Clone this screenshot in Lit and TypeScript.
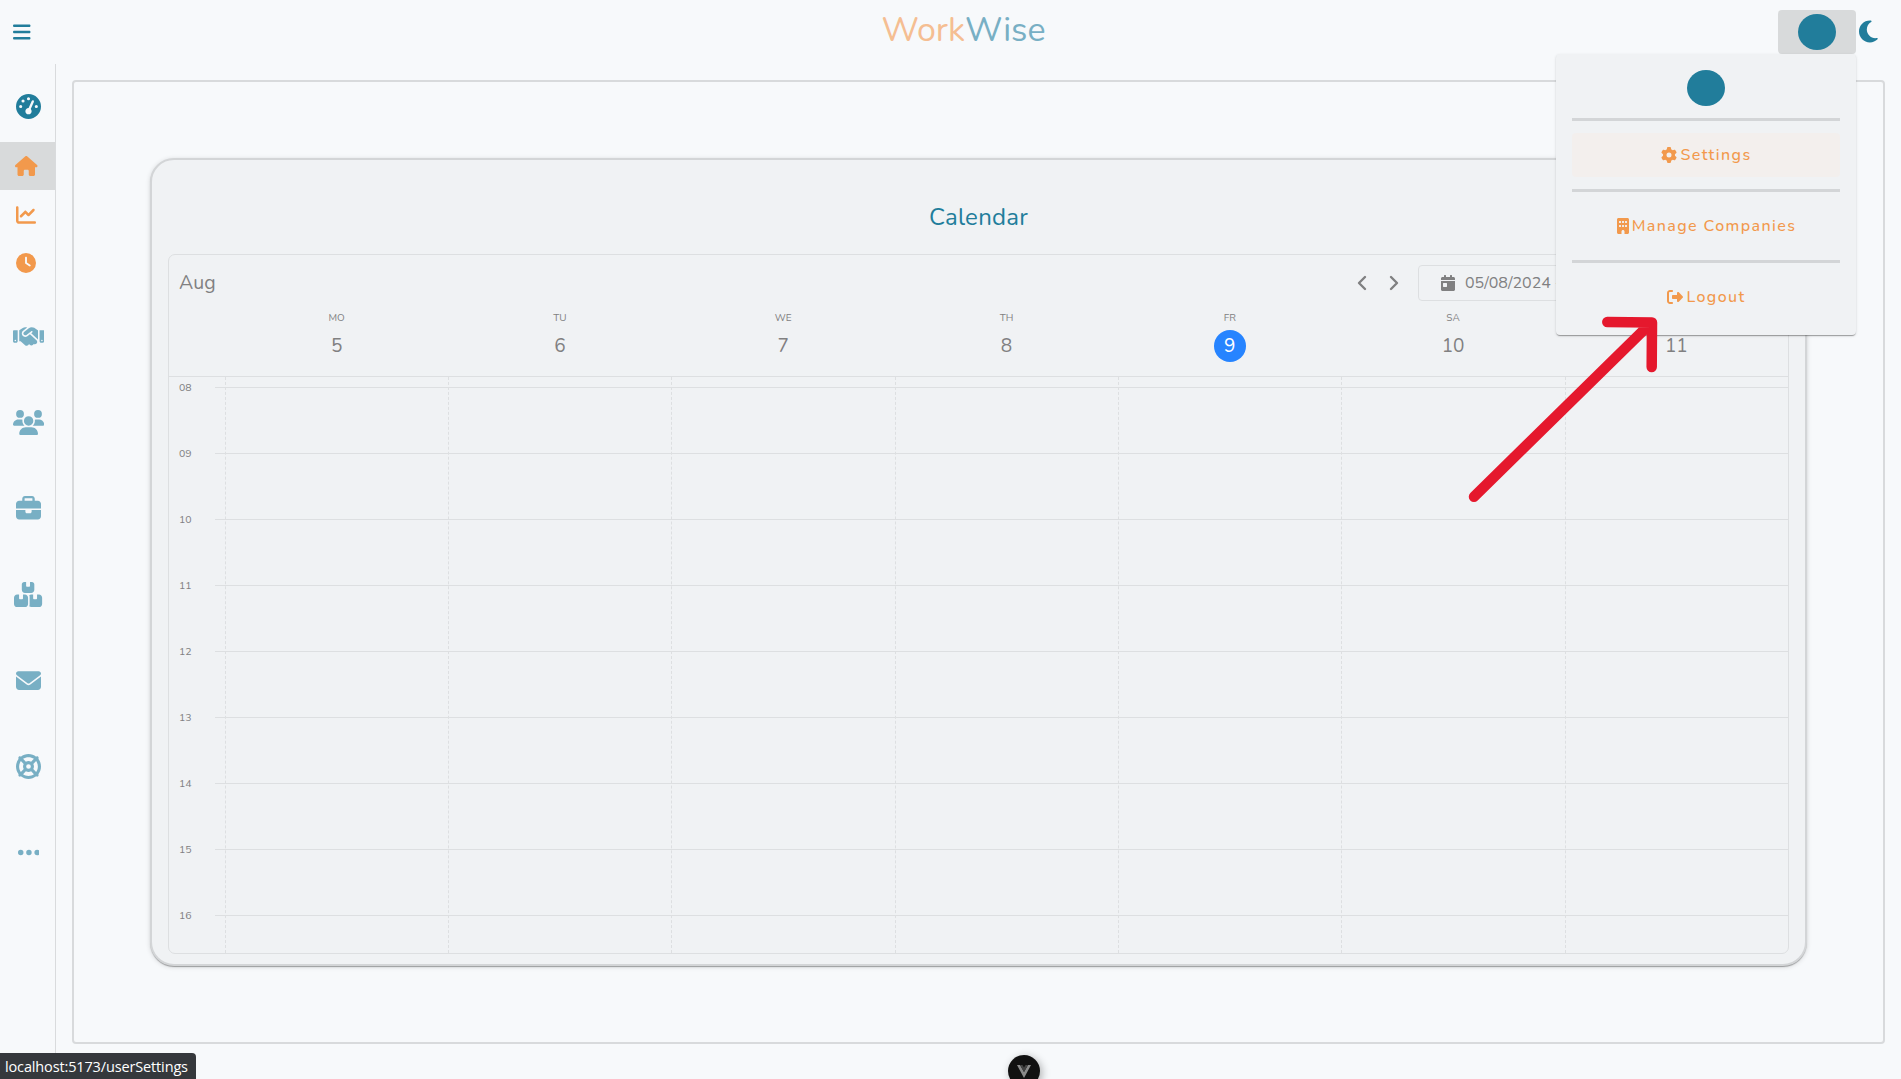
import { LitElement, html, css, svg } from "lit";
import { customElement, property } from "lit/decorators.js";
import { classMap } from "lit/directives/class-map.js";

const ICONS: Record<string, { w: number; d: string }> = {
  bars: { w: 448, d: "M0 96C0 78.3 14.3 64 32 64H416c17.7 0 32 14.3 32 32s-14.3 32-32 32H32C14.3 128 0 113.7 0 96zM0 256c0-17.7 14.3-32 32-32H416c17.7 0 32 14.3 32 32s-14.3 32-32 32H32c-17.7 0-32-14.3-32-32zM448 416c0 17.7-14.3 32-32 32H32c-17.7 0-32-14.3-32-32s14.3-32 32-32H416c17.7 0 32 14.3 32 32z" },
  moon: { w: 384, d: "M223.5 32C100 32 0 132.3 0 256S100 480 223.5 480c60.6 0 115.5-24.2 155.8-63.4c5-4.9 6.3-12.5 3.1-18.7s-10.1-9.7-17-8.5c-9.8 1.7-19.8 2.6-30.1 2.6c-96.9 0-175.5-78.8-175.5-176c0-65.8 36-123.1 89.3-153.3c6.1-3.5 9.2-10.5 7.7-17.3s-7.3-11.9-14.3-12.5c-6.3-.5-12.6-.8-19-.8z" },
  gauge: { w: 512, d: "M0 256a256 256 0 1 1 512 0A256 256 0 1 1 0 256zM288 96a32 32 0 1 0 -64 0 32 32 0 1 0 64 0zM256 416c35.3 0 64-28.7 64-64c0-17.4-6.9-33.1-18.1-44.6L366 161.7c5.3-12.1-.2-26.3-12.3-31.6s-26.3 .2-31.6 12.3L257.9 288c-.6 0-1.3 0-1.9 0c-35.3 0-64 28.7-64 64s28.7 64 64 64zM176 144a32 32 0 1 0 -64 0 32 32 0 1 0 64 0zM96 288a32 32 0 1 0 0-64 32 32 0 1 0 0 64zm352-32a32 32 0 1 0 -64 0 32 32 0 1 0 64 0z" },
  house: { w: 576, d: "M575.8 255.5c0 18-15 32.1-32 32.1h-32l.7 160.2c0 2.7-.2 5.4-.5 8.1V472c0 22.1-17.9 40-40 40H456c-1.1 0-2.2 0-3.3-.1c-1.4 .1-2.8 .1-4.2 .1H416 392c-22.1 0-40-17.9-40-40V448 384c0-17.7-14.3-32-32-32H256c-17.7 0-32 14.3-32 32v64 24c0 22.1-17.9 40-40 40H160 128.1c-1.5 0-3-.1-4.5-.2c-1.2 .1-2.4 .2-3.6 .2H104c-22.1 0-40-17.9-40-40V360c0-.9 0-1.9 .1-2.8V287.6H32c-18 0-32-14-32-32.1c0-9 3-17 10-24L266.4 8c7-7 15-8 22-8s15 2 21 7L564.8 231.5c8 7 12 15 11 24z" },
  chart: { w: 512, d: "M64 64c0-17.7-14.3-32-32-32S0 46.3 0 64V400c0 44.2 35.8 80 80 80H480c17.7 0 32-14.3 32-32s-14.3-32-32-32H80c-8.8 0-16-7.2-16-16V64zm406.6 86.6c12.5-12.5 12.5-32.8 0-45.3s-32.8-12.5-45.3 0L320 210.7l-57.4-57.4c-12.5-12.5-32.8-12.5-45.3 0l-112 112c-12.5 12.5-12.5 32.8 0 45.3s32.8 12.5 45.3 0L240 221.3l57.4 57.4c12.5 12.5 32.8 12.5 45.3 0l128-128z" },
  clock: { w: 512, d: "M256 0a256 256 0 1 1 0 512A256 256 0 1 1 256 0zM232 120V256c0 8 4 15.5 10.7 20l96 64c11 7.4 25.9 4.4 33.3-6.7s4.4-25.9-6.7-33.3L280 243.2V120c0-13.3-10.7-24-24-24s-24 10.7-24 24z" },
  handshake: { w: 640, d: "M323.4 85.2l-96.8 78.4c-16.1 13-19.2 36.4-7 53.1c12.9 17.8 38 21.3 55.3 7.8l99.3-77.2c7-5.4 17-4.2 22.5 2.8s4.2 17-2.8 22.5l-20.9 16.2L512 316.8V128h-.7l-3.9-2.5L434.8 79c-15.3-9.8-33.2-15-51.4-15c-21.8 0-43 7.5-60 21.2zm22.8 124.4l-51.7 40.2C263 274.3 217.3 268 193.7 235.6c-22.2-30.5-16.6-73.1 12.7-96.8l83.2-67.3c-11.6-4.9-24.1-7.4-36.8-7.4C234 64 215.7 69.6 200 80l-72 48V352h28.2l91.4 83.4c19.6 17.9 49.9 16.5 67.8-3.1c5.5-6.1 9.2-13.2 11.1-20.6l17 15.6c19.5 17.9 49.9 16.6 67.8-2.9c4.5-4.9 7.8-10.6 9.9-16.5c19.4 13 45.8 10.3 62.1-7.5c17.9-19.5 16.6-49.9-2.9-67.8l-134.2-123zM16 128c-8.8 0-16 7.2-16 16V352c0 17.7 14.3 32 32 32H64c17.7 0 32-14.3 32-32V128H16zM48 320a16 16 0 1 1 0 32 16 16 0 1 1 0-32zM544 128V352c0 17.7 14.3 32 32 32h32c17.7 0 32-14.3 32-32V144c0-8.8-7.2-16-16-16H544zm32 208a16 16 0 1 1 32 0 16 16 0 1 1 -32 0z" },
  users: { w: 640, d: "M144 0a80 80 0 1 1 0 160A80 80 0 1 1 144 0zM512 0a80 80 0 1 1 0 160A80 80 0 1 1 512 0zM0 298.7C0 239.8 47.8 192 106.7 192h42.7c15.9 0 31 3.5 44.6 9.7c-1.3 7.2-1.9 14.7-1.9 22.3c0 38.2 16.8 72.5 43.3 96c-.2 0-.4 0-.7 0H21.3C9.6 320 0 310.4 0 298.7zM405.3 320c-.2 0-.4 0-.7 0c26.6-23.5 43.3-57.8 43.3-96c0-7.6-.7-15-1.9-22.3c13.6-6.3 28.7-9.7 44.6-9.7h42.7C592.2 192 640 239.8 640 298.7c0 11.8-9.6 21.3-21.3 21.3H405.3zM224 224a96 96 0 1 1 192 0 96 96 0 1 1 -192 0zM128 485.3C128 411.7 187.7 352 261.3 352H378.7C452.3 352 512 411.7 512 485.3c0 14.7-11.9 26.7-26.7 26.7H154.7c-14.7 0-26.7-11.9-26.7-26.7z" },
  briefcase: { w: 512, d: "M184 48H328c4.4 0 8 3.6 8 8V96H176V56c0-4.4 3.6-8 8-8zm-56 8V96H64C28.7 96 0 124.7 0 160v96H192 320 512V160c0-35.3-28.7-64-64-64H384V56c0-30.9-25.1-56-56-56H184c-30.9 0-56 25.1-56 56zM512 288H320v32c0 17.7-14.3 32-32 32H224c-17.7 0-32-14.3-32-32V288H0V416c0 35.3 28.7 64 64 64H448c35.3 0 64-28.7 64-64V288z" },
  boxes: { w: 576, d: "M248 0H208c-26.5 0-48 21.5-48 48V160c0 35.3 28.7 64 64 64H352c35.3 0 64-28.7 64-64V48c0-26.5-21.5-48-48-48H328V80c0 8.8-7.2 16-16 16H264c-8.8 0-16-7.2-16-16V0zM64 256c-35.3 0-64 28.7-64 64V448c0 35.3 28.7 64 64 64H224c35.3 0 64-28.7 64-64V320c0-35.3-28.7-64-64-64H184v80c0 8.8-7.2 16-16 16H120c-8.8 0-16-7.2-16-16V256H64zM352 512H512c35.3 0 64-28.7 64-64V320c0-35.3-28.7-64-64-64H472v80c0 8.8-7.2 16-16 16H408c-8.8 0-16-7.2-16-16V256H352c-15 0-28.8 5.1-39.7 13.8c4.9 10.4 7.7 22 7.7 34.2V464c0 12.2-2.8 23.8-7.7 34.2C323.2 506.9 337 512 352 512z" },
  envelope: { w: 512, d: "M48 64C21.5 64 0 85.5 0 112c0 15.1 7.1 29.3 19.2 38.4L236.8 313.6c11.4 8.5 27 8.5 38.4 0L492.8 150.4c12.1-9.1 19.2-23.3 19.2-38.4c0-26.5-21.5-48-48-48H48zM0 176V384c0 35.3 28.7 64 64 64H448c35.3 0 64-28.7 64-64V176L294.4 339.2c-22.8 17.1-54 17.1-76.8 0L0 176z" },
  lifering: { w: 512, d: "M367.2 412.5C335.9 434.9 297.5 448 256 448s-79.9-13.1-111.2-35.5l58-58c15.8 8.6 34 13.5 53.3 13.5s37.4-4.9 53.3-13.5l58 58zm90.7 .8c33.8-43.4 54-98 54-157.3s-20.2-113.9-54-157.3c9-12.5 7.9-30.1-3.4-41.3S425.8 45 413.3 54C369.9 20.2 315.3 0 256 0S142.1 20.2 98.7 54c-12.5-9-30.1-7.9-41.3 3.4S45 86.2 54 98.7C20.2 142.1 0 196.7 0 256s20.2 113.9 54 157.3c-9 12.5-7.9 30.1 3.4 41.3S86.2 467 98.7 458c43.4 33.8 98 54 157.3 54s113.9-20.2 157.3-54c12.5 9 30.1 7.9 41.3-3.4s12.4-28.8 3.4-41.3zm-45.5-46.1l-58-58c8.6-15.8 13.5-34 13.5-53.3s-4.9-37.4-13.5-53.3l58-58C434.9 176.1 448 214.5 448 256s-13.1 79.9-35.5 111.2zM367.2 99.5l-58 58c-15.8-8.6-34-13.5-53.3-13.5s-37.4 4.9-53.3 13.5l-58-58C176.1 77.1 214.5 64 256 64s79.9 13.1 111.2 35.5zM157.5 309.3l-58 58C77.1 335.9 64 297.5 64 256s13.1-79.9 35.5-111.2l58 58c-8.6 15.8-13.5 34-13.5 53.3s4.9 37.4 13.5 53.3zM208 256a48 48 0 1 1 96 0 48 48 0 1 1 -96 0z" },
  ellipsis: { w: 448, d: "M0 256a56 56 0 1 1 112 0A56 56 0 1 1 0 256zM168 256a56 56 0 1 1 112 0A56 56 0 1 1 168 256zM336 256a56 56 0 1 1 112 0A56 56 0 1 1 336 256z" },
  gear: { w: 512, d: "M495.9 166.6c3.2 8.7 .5 18.4-6.4 24.6l-43.3 39.4c1.1 8.3 1.7 16.8 1.7 25.4s-.6 17.1-1.7 25.4l43.3 39.4c6.9 6.2 9.6 15.9 6.4 24.6c-4.4 11.9-9.7 23.3-15.8 34.3l-4.7 8.1c-6.6 11-14 21.4-22.1 31.2c-5.9 7.2-15.7 9.6-24.5 6.8l-55.7-17.7c-13.4 10.3-28.2 18.9-44 25.4l-12.5 57.1c-2 9.1-9 16.3-18.2 17.8c-13.8 2.3-28 3.5-42.5 3.5s-28.7-1.2-42.5-3.5c-9.2-1.5-16.2-8.7-18.2-17.8l-12.5-57.1c-15.8-6.5-30.6-15.1-44-25.4L83.1 425.9c-8.8 2.8-18.6 .3-24.5-6.8c-8.1-9.8-15.5-20.2-22.1-31.2l-4.7-8.1c-6.1-11-11.4-22.4-15.8-34.3c-3.2-8.7-.5-18.4 6.4-24.6l43.3-39.4C64.6 273.1 64 264.6 64 256s.6-17.1 1.7-25.4L22.4 191.2c-6.9-6.2-9.6-15.9-6.4-24.6c4.4-11.9 9.7-23.3 15.8-34.3l4.7-8.1c6.6-11 14-21.4 22.1-31.2c5.9-7.2 15.7-9.6 24.5-6.8l55.7 17.7c13.4-10.3 28.2-18.9 44-25.4l12.5-57.1c2-9.1 9-16.3 18.2-17.8C227.3 1.2 241.5 0 256 0s28.7 1.2 42.5 3.5c9.2 1.5 16.2 8.7 18.2 17.8l12.5 57.1c15.8 6.5 30.6 15.1 44 25.4l55.7-17.7c8.8-2.8 18.6-.3 24.5 6.8c8.1 9.8 15.5 20.2 22.1 31.2l4.7 8.1c6.1 11 11.4 22.4 15.8 34.3zM256 336a80 80 0 1 0 0-160 80 80 0 1 0 0 160z" },
  building: { w: 384, d: "M48 0C21.5 0 0 21.5 0 48V464c0 26.5 21.5 48 48 48h96V432c0-26.5 21.5-48 48-48s48 21.5 48 48v80h96c26.5 0 48-21.5 48-48V48c0-26.5-21.5-48-48-48H48zM64 240c0-8.8 7.2-16 16-16h32c8.8 0 16 7.2 16 16v32c0 8.8-7.2 16-16 16H80c-8.8 0-16-7.2-16-16V240zm112-16h32c8.8 0 16 7.2 16 16v32c0 8.8-7.2 16-16 16H176c-8.8 0-16-7.2-16-16V240c0-8.8 7.2-16 16-16zm80 16c0-8.8 7.2-16 16-16h32c8.8 0 16 7.2 16 16v32c0 8.8-7.2 16-16 16H272c-8.8 0-16-7.2-16-16V240zM80 96h32c8.8 0 16 7.2 16 16v32c0 8.8-7.2 16-16 16H80c-8.8 0-16-7.2-16-16V112c0-8.8 7.2-16 16-16zm80 16c0-8.8 7.2-16 16-16h32c8.8 0 16 7.2 16 16v32c0 8.8-7.2 16-16 16H176c-8.8 0-16-7.2-16-16V112zM272 96h32c8.8 0 16 7.2 16 16v32c0 8.8-7.2 16-16 16H272c-8.8 0-16-7.2-16-16V112c0-8.8 7.2-16 16-16z" },
  logout: { w: 512, d: "M377.9 105.9L500.7 228.7c7.2 7.2 11.3 17.1 11.3 27.3s-4.1 20.1-11.3 27.3L377.9 406.1c-6.4 6.4-15 9.9-24 9.9c-18.7 0-33.9-15.2-33.9-33.9l0-62.1-128 0c-17.7 0-32-14.3-32-32l0-64c0-17.7 14.3-32 32-32l128 0 0-62.1c0-18.7 15.2-33.9 33.9-33.9c9 0 17.6 3.6 24 9.9zM160 96L96 96c-17.7 0-32 14.3-32 32l0 256c0 17.7 14.3 32 32 32l64 0c17.7 0 32 14.3 32 32s-14.3 32-32 32l-64 0c-53 0-96-43-96-96L0 128C0 75 43 32 96 32l64 0c17.7 0 32 14.3 32 32s-14.3 32-32 32z" },
  calendar: { w: 448, d: "M0 464c0 26.5 21.5 48 48 48h352c26.5 0 48-21.5 48-48V192H0v272zm64-192c0-8.8 7.2-16 16-16h96c8.8 0 16 7.2 16 16v96c0 8.8-7.2 16-16 16H80c-8.8 0-16-7.2-16-16v-96zM400 64h-48V16c0-8.8-7.2-16-16-16h-32c-8.8 0-16 7.2-16 16v48H160V16c0-8.8-7.2-16-16-16h-32c-8.8 0-16 7.2-16 16v48H48C21.5 64 0 85.5 0 112v48h448v-48c0-26.5-21.5-48-48-48z" },
};

/** Solid glyph icon drawn in the current text colour. */
@customElement("ww-icon")
class WwIcon extends LitElement {
  @property() name = "";
  @property({ type: Number }) size = 16;
  static styles = css`
    :host { display: block; flex: none; line-height: 0; }
    svg { display: block; fill: currentColor; }
  `;
  render() {
    const i = ICONS[this.name];
    return html`<svg width=${(i.w / 512) * this.size} height=${this.size} viewBox="0 0 ${i.w} 512">
      ${svg`<path d=${i.d}></path>`}
    </svg>`;
  }
}

@customElement("ww-sidebar")
class WwSidebar extends LitElement {
  static styles = css`
    :host { display: block; width: 55px; border-right: 1px solid #d9dbdd; color: #78afc4; }
    .group { display: flex; align-items: center; justify-content: center; height: 86px; padding-left: 2px; }
    .group.first { height: 78px; box-sizing: border-box; padding-bottom: 0; padding-top: 7px; align-items: center; color: #217d9b; }
    .sub { display: flex; align-items: center; height: 48px; box-sizing: border-box; padding: 1px 0 0 16px; color: #f2994c; }
    .sub.active { background: #d8dadb; padding: 0 0 0 15.3px; }
    .rest { padding-top: 7.5px; }
  `;
  render() {
    return html`
      <div class="group first"><ww-icon name="gauge" size="25"></ww-icon></div>
      ${["house", "chart", "clock"].map(
        (n) => html`<div class=${classMap({ sub: true, active: n === "house" })}><ww-icon name=${n} size="20"></ww-icon></div>`
      )}
      <div class="rest">
        ${["handshake", "users", "briefcase", "boxes", "envelope", "lifering", "ellipsis"].map(
          (n) => html`<div class="group"><ww-icon name=${n} size="25"></ww-icon></div>`
        )}
      </div>
    `;
  }
}

@customElement("ww-calendar")
class WwCalendar extends LitElement {
  static styles = css`
    :host {
      display: flex; flex-direction: column; box-sizing: border-box; height: 700px;
      border: 1px solid #dddfe1; border-radius: 7px; color: #808081; overflow: hidden;
    }
    .bar { display: flex; align-items: center; height: 36px; padding: 10px 10px 0; }
    .month { font-size: 19.5px; flex: 1; letter-spacing: 0.1px; padding-bottom: 2px; }
    .chev { display: block; margin-right: 16px; fill: none; stroke: currentColor; stroke-width: 2.4; stroke-linecap: round; stroke-linejoin: round; }
    .range {
      display: flex; align-items: center; box-sizing: border-box; height: 36px; width: 360px;
      border: 1px solid #dddfe1; border-radius: 4px; padding-left: 22px; gap: 10px; font-size: 16px;
      letter-spacing: 0; white-space: nowrap;
    }
    .days { display: grid; grid-template-columns: repeat(7, 1fr); margin-left: 56px; height: 75px; text-align: center; }
    .dow { font-size: 10px; line-height: 12px; margin-top: 11px; }
    .num { font-size: 19px; line-height: 32px; width: 32px; height: 32px; margin: 6px auto 0; }
    .today { background: #2684ff; color: #fff; border-radius: 50%; }
    .body { display: grid; flex: 1; border-top: 1px solid #dddfe1; min-height: 0; overflow: hidden; }
    .cols, .hours { grid-area: 1 / 1; }
    .cols { display: grid; grid-template-columns: repeat(7, 1fr); margin-left: 55.9px; }
    .cols div { border-left: 1px dashed #dddfe1; }
    .hours { margin-top: -23px; }
    .hour { display: flex; align-items: center; height: 66px; padding-left: 10px; }
    .hour span { width: 36px; font-size: 10.5px; line-height: 12px; padding-top: 2px; }
    .hour i { flex: 1; height: 1px; background: #dddfe1; }
  `;
  render() {
    const days = [["MO", 5], ["TU", 6], ["WE", 7], ["TH", 8], ["FR", 9], ["SA", 10], ["SU", 11]];
    const hours = ["08", "09", "10", "11", "12", "13", "14", "15", "16"];
    return html`
      <div class="bar">
        <div class="month">Aug</div>
        <svg class="chev" width="16" height="20" viewBox="0 0 16 20"><path d="M11 4L5 10L11 16"></path></svg>
        <svg class="chev" width="16" height="20" viewBox="0 0 16 20"><path d="M5 4L11 10L5 16"></path></svg>
        <div class="range"><ww-icon name="calendar" size="16"></ww-icon><span>05/08/2024 - 11/08/2024</span></div>
      </div>
      <div class="days">
        ${days.map(([d, n]) => html`<div><div class="dow">${d}</div>
          <div class=${classMap({ num: true, today: n === 9 })}>${n}</div></div>`)}
      </div>
      <div class="body">
        <div class="cols">${days.map(() => html`<div></div>`)}</div>
        <div class="hours">${hours.map((h) => html`<div class="hour"><span>${h}</span><i></i></div>`)}</div>
      </div>
    `;
  }
}

@customElement("ww-user-menu")
class WwUserMenu extends LitElement {
  static styles = css`
    :host {
      display: flex; flex-direction: column; align-items: center; box-sizing: border-box;
      width: 300px; height: 281px; padding: 16px 16px 0; background: #f0f2f4; border-radius: 4px;
      box-shadow: 0 2px 1px -1px rgba(0,0,0,.2), 0 1px 1px rgba(0,0,0,.14), 0 1px 3px rgba(0,0,0,.12);
      color: #f2994c;
    }
    .avatar { width: 38px; height: 36px; border-radius: 50%; background: #217d9b; }
    .rule { width: 268px; height: 3px; background: #d3d5d7; margin: 12px 0; }
    .item {
      display: flex; align-items: center; justify-content: center; gap: 3px; width: 268px; height: 44px;
      box-sizing: border-box; padding-left: 1px;
      border-radius: 4px; font-size: 16px; font-weight: 500; letter-spacing: 1.4px;
    }
    .item span { padding-bottom: 1px; }
    .hover { background: #f3efed; }
  `;
  render() {
    const items = [["gear", "Settings"], ["building", "Manage Companies"], ["logout", "Logout"]];
    return html`
      <div class="avatar"></div>
      ${items.map(([icon, label], i) => html`
        <div class="rule"></div>
        <div class=${classMap({ item: true, hover: i === 0 })}><ww-icon name=${icon} size="16"></ww-icon><span>${label}</span></div>
      `)}
    `;
  }
}

@customElement("app-root")
class AppRoot extends LitElement {
  static styles = css`
    :host {
      display: flex; flex-direction: column; position: relative; box-sizing: border-box;
      width: 1901px; height: 1079px; background: #f7f9fb; overflow: hidden;
      font-family: Nunito, "Open Sans", "Noto Sans", sans-serif;
    }
    header { display: grid; grid-template-columns: 1fr auto 1fr; align-items: center; height: 64px; box-sizing: border-box; padding: 0 23px 0 13px; color: #217d9b; }
    header > ww-icon { margin-bottom: 1px; }
    .logo { font-size: 34px; line-height: 40px; margin-bottom: 5px; padding-left: 36px; color: #78afc4; }
    .logo b { font-weight: inherit; color: #f5be92; }
    .actions { display: flex; align-items: center; justify-content: flex-end; gap: 3px; }
    .actions ww-icon { margin-bottom: 1px; }
    .user { display: flex; align-items: center; justify-content: center; width: 78px; height: 44px; border-radius: 4px; background: #d8dadb; }
    .user i { width: 38px; height: 36px; border-radius: 50%; background: #217d9b; }
    .page { display: flex; flex: 1; }
    main { flex: 1; padding: 16px 16px 35px; display: flex; }
    .frame { flex: 1; border: 2px solid #d8dadc; border-radius: 4px; padding: 76px; display: flex; align-items: flex-start; }
    .card {
      flex: 1; box-sizing: border-box; height: 808px; border: 2px solid #d3d5d7; border-radius: 24px; background: #f0f2f4;
      padding: 40px 16px 0;
      box-shadow: 0 2px 1px -1px rgba(0,0,0,.2), 0 1px 1px rgba(0,0,0,.14), 0 1px 5px rgba(0,0,0,.14);
    }
    h1 { margin: 0 0 20px; text-align: center; font-size: 24px; line-height: 34px; font-weight: 400; letter-spacing: 0.25px; color: #217d9b; }
    .menu { position: absolute; left: 1556px; top: 54px; }
    .arrow { position: absolute; left: 1460px; top: 310px; fill: none; stroke: #e5182d; stroke-width: 10.5; stroke-linecap: round; stroke-linejoin: round; }
    .status {
      position: absolute; left: 0; bottom: 0; box-sizing: border-box; width: 196px; height: 26px; padding-left: 5px;
      border-radius: 0 4px 0 0; background: #35383c; color: #fff; font-size: 14.5px; line-height: 27px; letter-spacing: -0.14px;
      font-family: "Segoe UI", "Open Sans", sans-serif; white-space: nowrap;
    }
    .dev {
      position: absolute; left: 1008px; top: 1055px; width: 32px; height: 32px; border-radius: 50%; background: #111;
      box-shadow: 2px 2px 8px rgba(0,0,0,.3);
    }
    .dev svg { display: block; margin: 10px 0 0 9px; }
  `;
  render() {
    return html`
      <header>
        <ww-icon name="bars" size="20"></ww-icon>
        <div class="logo"><b>Work</b>Wise</div>
        <div class="actions"><div class="user"><i></i></div><ww-icon name="moon" size="25"></ww-icon></div>
      </header>
      <div class="page">
        <ww-sidebar></ww-sidebar>
        <main><div class="frame"><section class="card"><h1>Calendar</h1><ww-calendar></ww-calendar></section></div></main>
      </div>
      <ww-user-menu class="menu"></ww-user-menu>
      <svg class="arrow" width="210" height="200" viewBox="1460 310 210 200"><path d="M1474 496.7L1651.5 322.5M1607.3 322L1652 322.5L1651.7 367"></path></svg>
      <div class="status">localhost:5173/userSettings</div>
      <div class="dev"><svg width="14" height="13" viewBox="0 0 14 13">
        <path d="M0 0H3L7 7L11 0H14L7 13Z" fill="#8a8a8a"></path><path d="M3 0H5.4L7 2.6L8.6 0H11L7 7Z" fill="#444"></path>
      </svg></div>
    `;
  }
}
